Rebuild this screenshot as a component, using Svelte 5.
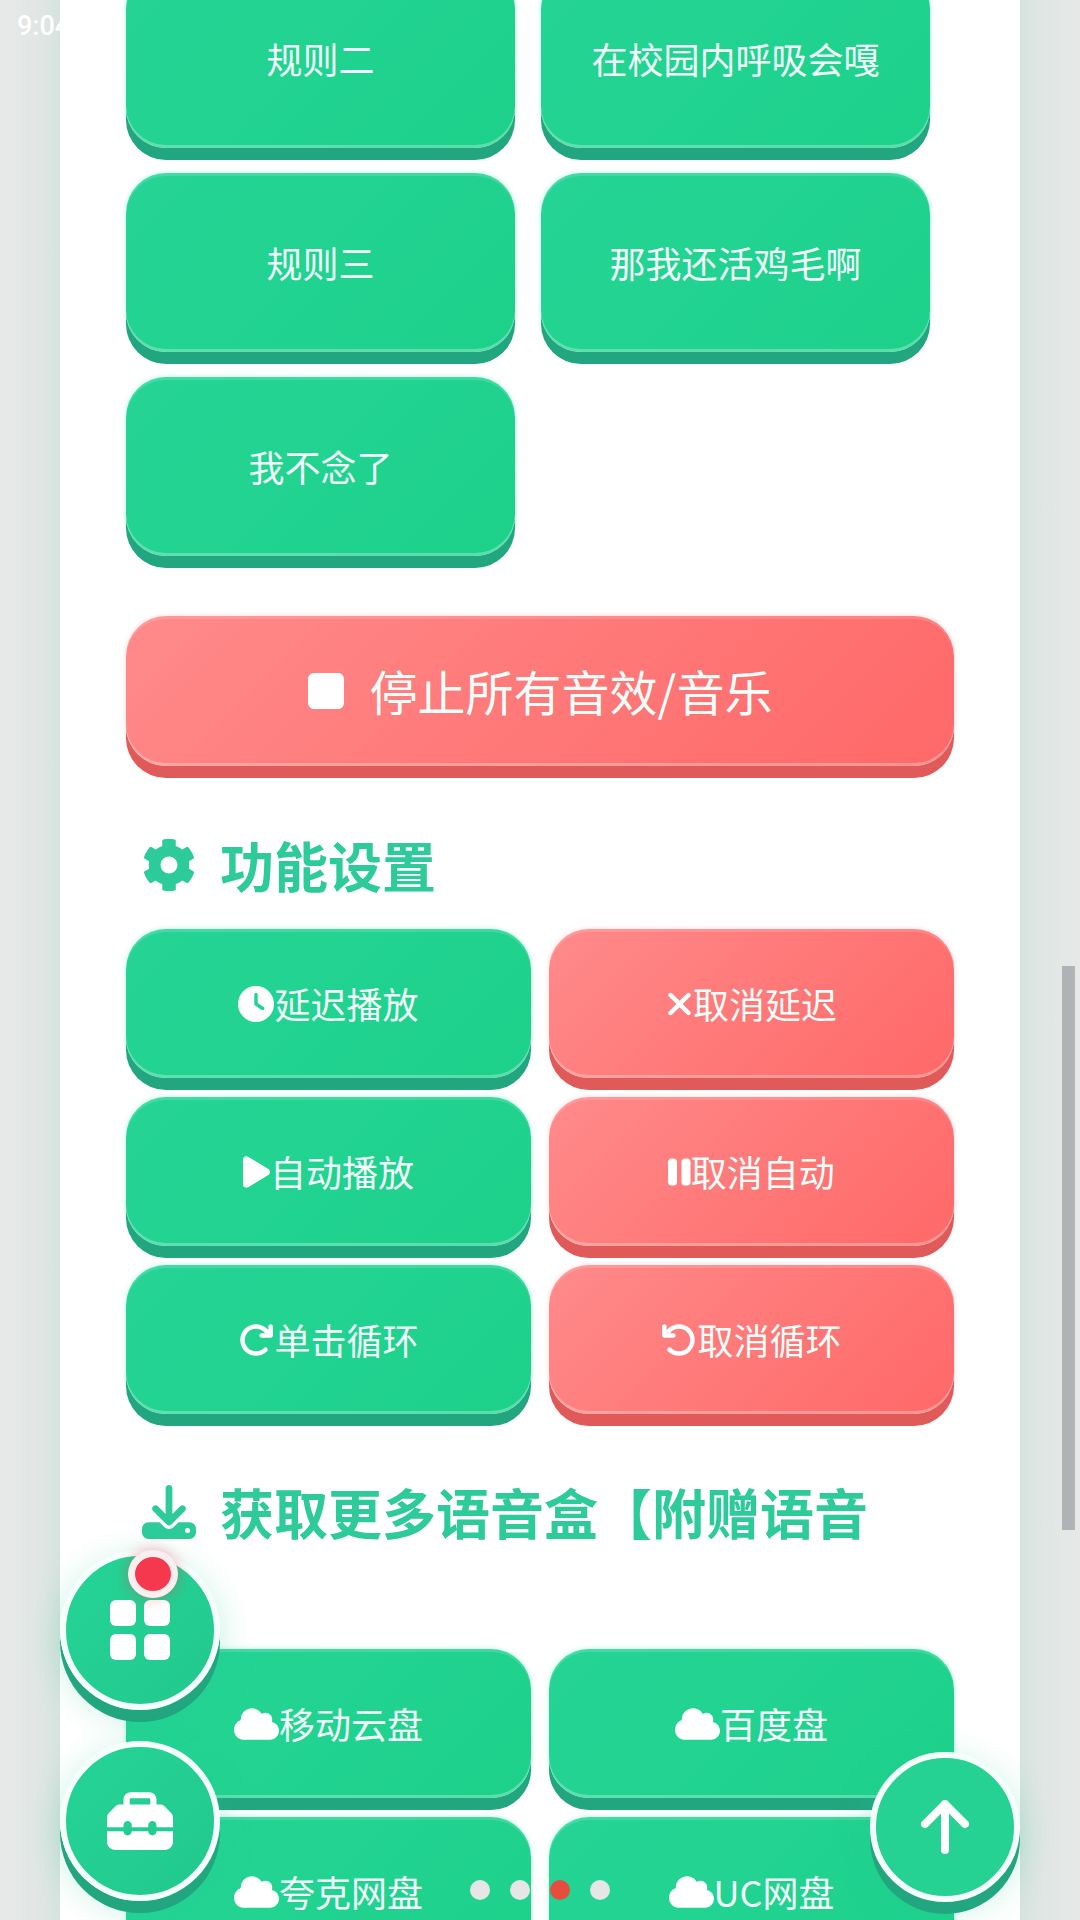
<script>
  const icons = {
    clock: [512, "M256 0a256 256 0 1 1 0 512A256 256 0 1 1 256 0zM232 120V256c0 8 4 15.5 10.7 20l96 64c11 7.4 25.9 4.4 33.3-6.7s4.4-25.9-6.7-33.3L280 243.2V120c0-13.3-10.7-24-24-24s-24 10.7-24 24z"],
    xmark: [384, "M342.6 150.6c12.5-12.5 12.5-32.8 0-45.3s-32.8-12.5-45.3 0L192 210.7 86.6 105.4c-12.5-12.5-32.8-12.5-45.3 0s-12.5 32.8 0 45.3L146.7 256 41.4 361.4c-12.5 12.5-12.5 32.8 0 45.3s32.8 12.5 45.3 0L192 301.3 297.4 406.6c12.5 12.5 32.8 12.5 45.3 0s12.5-32.8 0-45.3L237.3 256 342.6 150.6z"],
    play: [384, "M73 39c-14.8-9.1-33.4-9.4-48.5-.9S0 62.6 0 80V432c0 17.4 9.4 33.4 24.5 41.9s33.7 8.1 48.5-.9L361 297c14.3-8.7 23-24.2 23-41s-8.7-32.2-23-41L73 39z"],
    pause: [320, "M48 64C21.5 64 0 85.5 0 112V400c0 26.5 21.5 48 48 48H80c26.5 0 48-21.5 48-48V112c0-26.5-21.5-48-48-48H48zm192 0c-26.5 0-48 21.5-48 48V400c0 26.5 21.5 48 48 48h32c26.5 0 48-21.5 48-48V112c0-26.5-21.5-48-48-48H240z"],
    redo: [512, "M386.3 160H336c-17.7 0-32 14.3-32 32s14.3 32 32 32H464c17.7 0 32-14.3 32-32V64c0-17.7-14.3-32-32-32s-32 14.3-32 32v51.2L414.4 97.6c-87.5-87.5-229.3-87.5-316.8 0s-87.5 229.3 0 316.8s229.3 87.5 316.8 0c12.5-12.5 12.5-32.8 0-45.3s-32.8-12.5-45.3 0c-62.5 62.5-163.8 62.5-226.3 0s-62.5-163.8 0-226.3s163.8-62.5 226.3 0L386.3 160z"],
    undo: [512, "M125.7 160H176c17.7 0 32 14.3 32 32s-14.3 32-32 32H48c-17.7 0-32-14.3-32-32V64c0-17.7 14.3-32 32-32s32 14.3 32 32v51.2L97.6 97.6c87.5-87.5 229.3-87.5 316.8 0s87.5 229.3 0 316.8s-229.3 87.5-316.8 0c-12.5-12.5-12.5-32.8 0-45.3s32.8-12.5 45.3 0c62.5 62.5 163.8 62.5 226.3 0s62.5-163.8 0-226.3s-163.8-62.5-226.3 0L125.7 160z"],
    cloud: [640, "M0 336c0 79.5 64.5 144 144 144H512c70.7 0 128-57.3 128-128c0-61.9-44-113.6-102.4-125.4c4.1-10.7 6.4-22.4 6.4-34.6c0-53-43-96-96-96c-19.7 0-38.1 6-53.3 16.2C367 64.2 315.3 32 256 32C167.6 32 96 103.6 96 192c0 2.7 .1 5.4 .2 8.1C40.2 219.8 0 273.2 0 336z"],
    stop: [384, "M0 128C0 92.7 28.7 64 64 64H320c35.3 0 64 28.7 64 64V384c0 35.3-28.7 64-64 64H64c-35.3 0-64-28.7-64-64V128z"],
    gear: [512, "M487.4 315.7l-42.6-24.6c4.3-23.2 4.3-47 0-70.2l42.6-24.6c4.9-2.8 7.1-8.6 5.5-14-11.1-35.6-30-67.8-54.7-94.6-3.8-4.1-10-5.1-14.8-2.3L380.8 110c-17.9-15.4-38.5-27.3-60.8-35.1V25.8c0-5.6-3.9-10.5-9.4-11.7-36.7-8.2-74.3-7.8-109.2 0-5.5 1.2-9.4 6.1-9.4 11.7V75c-22.2 7.9-42.8 19.8-60.8 35.1L88.7 85.5c-4.9-2.8-11-1.9-14.8 2.3-24.7 26.7-43.6 58.9-54.7 94.6-1.7 5.4.6 11.2 5.5 14L67.3 221c-4.3 23.2-4.3 47 0 70.2l-42.6 24.6c-4.9 2.8-7.1 8.6-5.5 14 11.1 35.6 30 67.8 54.7 94.6 3.8 4.1 10 5.1 14.8 2.3l42.6-24.6c17.9 15.4 38.5 27.3 60.8 35.1v49.2c0 5.6 3.9 10.5 9.4 11.7 36.7 8.2 74.3 7.8 109.2 0 5.5-1.2 9.4-6.1 9.4-11.7v-49.2c22.2-7.9 42.8-19.8 60.8-35.1l42.6 24.6c4.9 2.8 11 1.9 14.8-2.3 24.7-26.7 43.6-58.9 54.7-94.6 1.5-5.5-.7-11.3-5.6-14.1zM256 336c-44.1 0-80-35.9-80-80s35.9-80 80-80 80 35.9 80 80-35.9 80-80 80z"],
    download: [512, "M288 32c0-17.7-14.3-32-32-32s-32 14.3-32 32V274.7l-73.4-73.4c-12.5-12.5-32.8-12.5-45.3 0s-12.5 32.8 0 45.3l128 128c12.5 12.5 32.8 12.5 45.3 0l128-128c12.5-12.5 12.5-32.8 0-45.3s-32.8-12.5-45.3 0L288 274.7V32zM64 352c-35.3 0-64 28.7-64 64v32c0 35.3 28.7 64 64 64H448c35.3 0 64-28.7 64-64V416c0-35.3-28.7-64-64-64H346.5l-45.3 45.3c-25 25-65.5 25-90.5 0L165.5 352H64zm368 56a24 24 0 1 1 0 48 24 24 0 1 1 0-48z"],
    toolbox: [512, "M176 88v40H336V88c0-4.4-3.6-8-8-8H184c-4.4 0-8 3.6-8 8zm-48 40V88c0-30.9 25.1-56 56-56H328c30.9 0 56 25.1 56 56v40h28.1c12.7 0 24.9 5.1 33.9 14.1l51.9 51.9c9 9 14.1 21.2 14.1 33.9V304H384V288c0-17.7-14.3-32-32-32s-32 14.3-32 32v16H192V288c0-17.7-14.3-32-32-32s-32 14.3-32 32v16H0V227.9c0-12.7 5.1-24.9 14.1-33.9l51.9-51.9c9-9 21.2-14.1 33.9-14.1H128zM0 416V336H128c0 17.7 14.3 32 32 32s32-14.3 32-32H320c0 17.7 14.3 32 32 32s32-14.3 32-32H512v80c0 35.3-28.7 64-64 64H64c-35.3 0-64-28.7-64-64z"]
  };
  const rules = ["规则二", "在校园内呼吸会嘎", "规则三", "那我还活鸡毛啊", "我不念了"];
  const funcs = [
    ["clock", "延迟播放", "green"], ["xmark", "取消延迟", "red"],
    ["play", "自动播放", "green"], ["pause", "取消自动", "red"],
    ["redo", "单击循环", "green"], ["undo", "取消循环", "red"]
  ];
  const disks = ["移动云盘", "百度盘", "夸克网盘", "UC网盘"];
</script>

{#snippet icon(name, cls)}
  <svg class={cls} viewBox="0 0 {icons[name][0]} 512" aria-hidden="true"><path d={icons[name][1]} /></svg>
{/snippet}

<div class="screen">
  <main class="sheet">
    <section class="rules">
      {#each rules as r}
        <button class="btn green rule">{r}</button>
      {/each}
    </section>

    <button class="btn red stop">{@render icon("stop", "ic-stop")}<span>停止所有音效/音乐</span></button>

    <h2 class="head first">{@render icon("gear", "ic-head")}<span>功能设置</span></h2>
    <section class="grid">
      {#each funcs as f}
        <button class="btn {f[2]} cell">{@render icon(f[0], "ic")}<span>{f[1]}</span></button>
      {/each}
    </section>

    <h2 class="head second">{@render icon("download", "ic-head")}<span>获取更多语音盒【附赠语音</span></h2>
    <section class="grid">
      {#each disks as d}
        <button class="btn green cell">{@render icon("cloud", "ic")}<span>{d}</span></button>
      {/each}
    </section>
  </main>

  <div class="status"><span>9:04</span><span class="status-end">1</span></div>
  <div class="scrollbar"></div>

  <button class="fab fab-apps" aria-label="应用">
    <span class="apps"><i></i><i></i><i></i><i></i></span>
    <span class="badge"></span>
  </button>
  <button class="fab fab-tools" aria-label="工具">{@render icon("toolbox", "ic-tool")}</button>
  <button class="fab fab-up" aria-label="顶部">
    <svg class="ic-up" viewBox="0 0 48 54"><path d="M24 4V50M4 24L24 4L44 24" /></svg>
  </button>

  <div class="dots"><i></i><i></i><i class="on"></i><i></i></div>
</div>

<style>
  :global(body) { margin: 0; background: #e2e7e5; }
  .screen {
    position: relative;
    width: 1080px;
    height: 1920px;
    overflow: hidden;
    background: linear-gradient(90deg, #e7e9e8 0, #dde5e2 60px, #dde5e2 1020px, #e6e8e7 1080px);
    font-family: "Noto Sans CJK SC", "Noto Sans", sans-serif;
  }
  .sheet {
    box-sizing: border-box;
    width: 960px;
    margin: -31px 0 0 60px;
    padding: 0 66px;
    background: #fff;
    box-shadow: 0 0 24px rgba(40, 190, 140, 0.08);
  }
  button { font-family: inherit; border: 0; padding: 0; }
  .btn {
    display: flex;
    align-items: center;
    justify-content: center;
    color: #f2fdf9;
    font-size: 36px;
    line-height: 1.2;
    border-radius: 40px;
  }
  .btn.green {
    background: linear-gradient(135deg, #25d496, #1dd18a);
    box-shadow: inset 0 -3px 0 rgba(255, 255, 255, 0.28), inset 0 3px 0 rgba(255, 255, 255, 0.14),
      0 12px 0 #22a67f, 0 0 5px rgba(90, 240, 200, 0.5);
  }
  .btn.red {
    background: linear-gradient(135deg, #ff8a8a, #ff6868);
    box-shadow: inset 0 -3px 0 rgba(255, 255, 255, 0.28), inset 0 3px 0 rgba(255, 255, 255, 0.14),
      0 12px 0 #e05a5a, 0 0 5px rgba(255, 170, 170, 0.5);
  }
  .btn svg { fill: #fff; flex: none; }
  .rules {
    display: grid;
    grid-template-columns: 389px 389px;
    column-gap: 26px;
    row-gap: 25px;
  }
  .rule { height: 179px; }
  .stop {
    width: 100%;
    height: 150px;
    margin-top: 60px;
    font-size: 48px;
    gap: 26px;
  }
  .ic-stop { height: 48px; }
  .head {
    display: flex;
    align-items: center;
    gap: 24px;
    height: 70px;
    margin: 0;
    padding-left: 16px;
    color: #2ecb9a;
    font-size: 54px;
    font-weight: 700;
    line-height: 70px;
    white-space: nowrap;
  }
  .head.first { margin: 64px 0 29px; }
  .head.second { margin: 63px 0 102px; }
  .ic-head { height: 54px; flex: none; fill: #2ecb9a; }
  .grid {
    display: grid;
    grid-template-columns: 405px 405px;
    column-gap: 18px;
    row-gap: 19px;
  }
  .cell { height: 149px; }
  .ic { height: 36px; }

  .status {
    position: absolute;
    top: 8px;
    left: 17px;
    right: 56px;
    display: flex;
    justify-content: space-between;
    color: #fff;
    font: 500 27px/36px Roboto, sans-serif;
  }
  .scrollbar {
    position: absolute;
    left: 1062px;
    top: 966px;
    width: 13px;
    height: 564px;
    background: #b0b3b5;
  }
  .fab {
    position: absolute;
    display: flex;
    align-items: center;
    justify-content: center;
    box-sizing: border-box;
    border: 6px solid #f4fffb;
    border-radius: 50%;
    background: linear-gradient(135deg, #25d496, #22c88f);
    box-shadow: 0 12px 0 #22a67f, 0 8px 34px rgba(40, 200, 150, 0.28);
  }
  .fab-apps { left: 60px; top: 1550px; width: 160px; height: 160px; }
  .fab-tools { left: 60px; top: 1741px; width: 160px; height: 160px; }
  .fab-up { left: 870px; top: 1752px; width: 150px; height: 150px; background: #25d193; }
  .apps {
    display: grid;
    grid-template-columns: 26px 26px;
    grid-auto-rows: 26px;
    gap: 8px;
  }
  .apps i { background: #fff; border-radius: 6px; }
  .badge {
    position: absolute;
    left: 62px;
    top: -6px;
    box-sizing: border-box;
    width: 50px;
    height: 48px;
    border: 7px solid #fbeef0;
    border-radius: 50%;
    background: #f6384f;
    box-shadow: 0 0 14px rgba(246, 56, 79, 0.4);
  }
  .ic-tool { height: 66px; fill: #fff; }
  .ic-up { width: 48px; height: 54px; fill: none; stroke: #fff; stroke-width: 8; stroke-linecap: round; stroke-linejoin: round; }
  .dots {
    position: absolute;
    left: 470px;
    top: 1880px;
    display: flex;
    gap: 20px;
  }
  .dots i { width: 20px; height: 20px; border-radius: 50%; background: #e6e6e6; }
  .dots i.on { background: #e74c3c; }
</style>
